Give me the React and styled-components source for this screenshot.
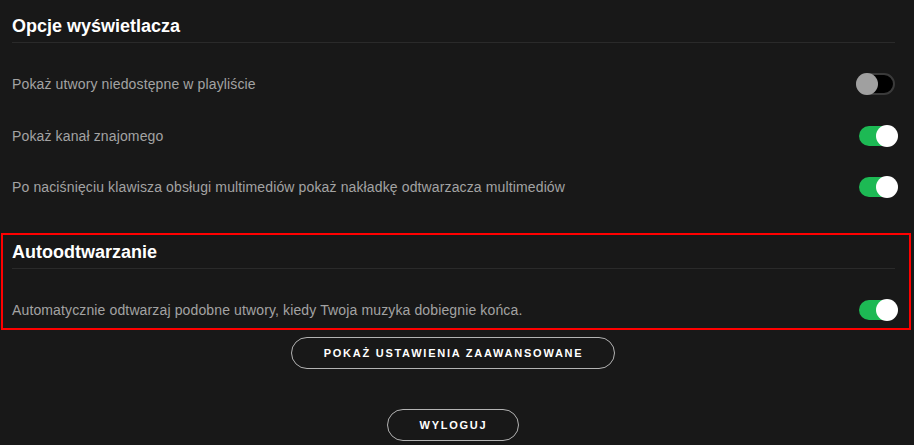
import React, { useState } from "react";
import styled, { createGlobalStyle } from "styled-components";

const GlobalStyle = createGlobalStyle`
  html, body { margin: 0; padding: 0; background: #181818; }
  body { font-family: "Liberation Sans", Arial, sans-serif; -webkit-font-smoothing: antialiased; }
  * { box-sizing: border-box; }
`;

const Page = styled.div`
  display: flex;
  flex-direction: column;
  padding: 9px 16px 0 12px;
  min-height: 445px;
  background: #181818;
`;

const Section = styled.section`
  display: flex;
  flex-direction: column;
  ${(p) =>
    p.$highlighted &&
    `
    margin: 28px -13px 0 -11px;
    padding: 0 11px 0 9px;
    border: 2px solid #ff0000;
  `}
`;

const SectionTitle = styled.h2`
  margin: 0 3px 0 0;
  padding: 5px 0 4px;
  font-size: 18px;
  line-height: 24px;
  font-weight: 700;
  color: #ffffff;
  border-bottom: 1px solid #2a2a2a;
`;

const RowList = styled.div`
  display: flex;
  flex-direction: column;
  gap: 15.5px;
  padding-top: 23px;
`;

const Row = styled.div`
  display: flex;
  align-items: center;
  justify-content: space-between;
  height: 36px;
`;

const Label = styled.span`
  font-size: 14px;
  letter-spacing: 0.13px;
  color: #a3a3a3;
`;

const SwitchBox = styled.button`
  position: relative;
  width: 42px;
  height: 22px;
  padding: 0;
  border: 0;
  background: transparent;
  cursor: pointer;
  flex-shrink: 0;
`;

const Track = styled.span`
  position: absolute;
  top: ${(p) => (p.$on ? "1px" : "0")};
  left: ${(p) => (p.$on ? "3px" : "0")};
  width: ${(p) => (p.$on ? "34px" : "39px")};
  height: ${(p) => (p.$on ? "20px" : "22px")};
  border-radius: 11px;
  background: ${(p) => (p.$on ? "#1db954" : "#000000")};
  border: ${(p) => (p.$on ? "0" : "2px solid #3a3a3a")};
`;

const Knob = styled.span`
  position: absolute;
  top: 0;
  left: ${(p) => (p.$on ? "20px" : "0")};
  width: 22px;
  height: 22px;
  border-radius: 50%;
  background: ${(p) => (p.$on ? "#ffffff" : "#a0a0a0")};
`;

function Toggle({ initial }) {
  const [on, setOn] = useState(initial);
  return (
    <SwitchBox type="button" onClick={() => setOn(!on)} aria-pressed={on}>
      <Track $on={on} />
      <Knob $on={on} />
    </SwitchBox>
  );
}

const ButtonArea = styled.div`
  display: flex;
  flex-direction: column;
  align-items: center;
  gap: 40px;
  margin: 7px 4px 0 0;
`;

const PillButton = styled.button`
  height: 32px;
  padding: 0 31px 0 32px;
  border-radius: 16px;
  border: 1px solid #b3b3b3;
  background: transparent;
  color: #ffffff;
  font-family: "Liberation Sans", Arial, sans-serif;
  font-size: 11px;
  font-weight: 700;
  letter-spacing: 1.75px;
  text-transform: uppercase;
  cursor: pointer;
`;

const displayOptions = [
  { label: "Pokaż utwory niedostępne w playliście", on: false },
  { label: "Pokaż kanał znajomego", on: true },
  {
    label:
      "Po naciśnięciu klawisza obsługi multimediów pokaż nakładkę odtwarzacza multimediów",
    on: true,
  },
];

export default function App() {
  return (
    <>
      <GlobalStyle />
      <Page>
        <Section>
          <SectionTitle>Opcje wyświetlacza</SectionTitle>
          <RowList>
            {displayOptions.map((o) => (
              <Row key={o.label}>
                <Label>{o.label}</Label>
                <Toggle initial={o.on} />
              </Row>
            ))}
          </RowList>
        </Section>
        <Section $highlighted>
          <SectionTitle>Autoodtwarzanie</SectionTitle>
          <RowList>
            <Row>
              <Label>
                Automatycznie odtwarzaj podobne utwory, kiedy Twoja muzyka
                dobiegnie końca.
              </Label>
              <Toggle initial={true} />
            </Row>
          </RowList>
        </Section>
        <ButtonArea>
          <PillButton>Pokaż ustawienia zaawansowane</PillButton>
          <PillButton>Wyloguj</PillButton>
        </ButtonArea>
      </Page>
    </>
  );
}
